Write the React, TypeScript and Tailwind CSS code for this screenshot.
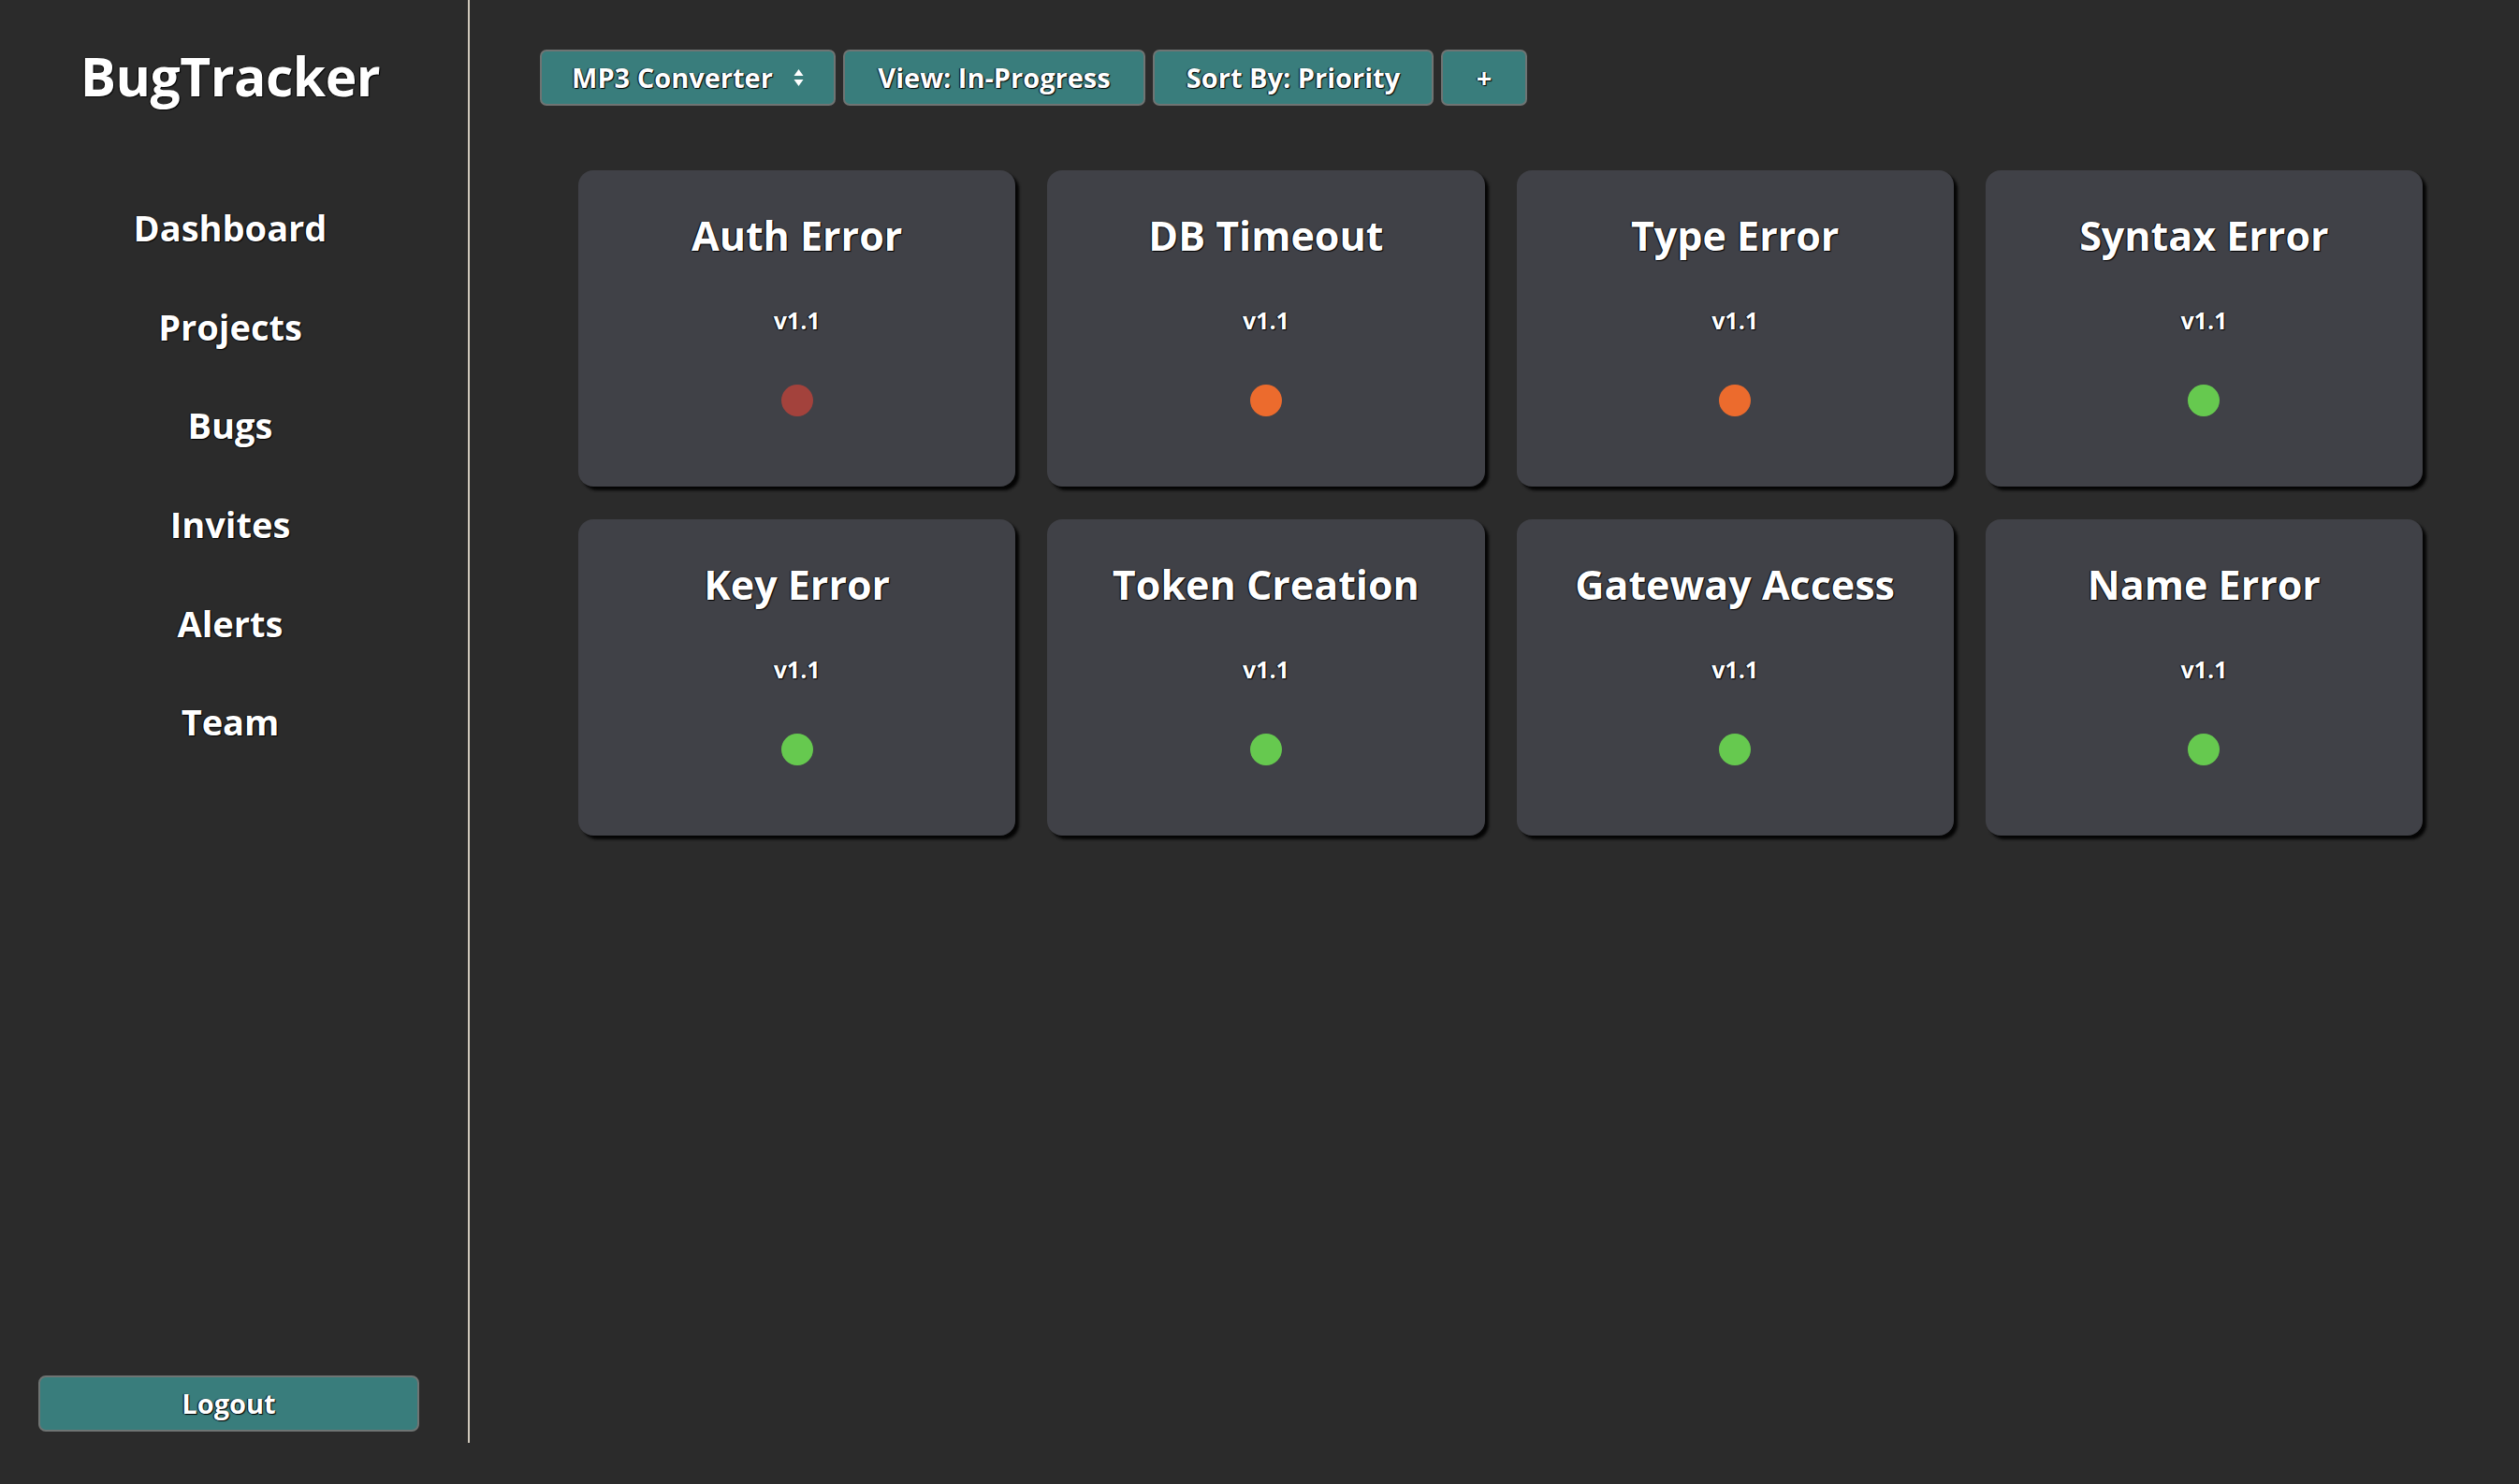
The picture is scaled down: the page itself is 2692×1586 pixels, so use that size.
const navItems = ['Dashboard', 'Projects', 'Bugs', 'Invites', 'Alerts', 'Team']

type Status = 'red' | 'orange' | 'green'

const bugs: { title: string; version: string; status: Status }[] = [
  { title: 'Auth Error', version: 'v1.1', status: 'red' },
  { title: 'DB Timeout', version: 'v1.1', status: 'orange' },
  { title: 'Type Error', version: 'v1.1', status: 'orange' },
  { title: 'Syntax Error', version: 'v1.1', status: 'green' },
  { title: 'Key Error', version: 'v1.1', status: 'green' },
  { title: 'Token Creation', version: 'v1.1', status: 'green' },
  { title: 'Gateway Access', version: 'v1.1', status: 'green' },
  { title: 'Name Error', version: 'v1.1', status: 'green' },
]

const dotColor: Record<Status, string> = {
  red: 'bg-[#a3423c]',
  orange: 'bg-[#ec6b2d]',
  green: 'bg-[#66c94f]',
}

const shadowText = '[text-shadow:1px_1px_1px_#000,-1px_0_1px_#000]'

function Sidebar() {
  return (
    <aside className="flex h-[1542px] w-[502px] shrink-0 flex-col items-center border-r-2 border-[#cfc8bb]">
      <div className="flex w-full flex-col items-center pr-[8px]">
        <h1 className={`pt-[43px] text-[57px] leading-[76px] font-bold tracking-[-0.5px] text-white ${shadowText}`}>BugTracker</h1>
        <nav className="mt-[72px] flex flex-col items-center">
          {navItems.map((item) => (
            <a key={item} className={`flex h-[105.6px] items-center text-[38px] font-bold text-white ${shadowText}`}>
              {item}
            </a>
          ))}
        </nav>
      </div>
      <div className="mt-auto mb-[12px] w-full pl-[41px] pr-[52px]">
        <button className={`h-[60px] w-full rounded-[8px] border-2 border-[#6f7473] bg-[#397d7c] text-[29px] font-bold text-white ${shadowText}`}>
          Logout
        </button>
      </div>
    </aside>
  )
}

function UpDown() {
  return (
    <svg width="11" height="20" viewBox="0 0 11 20" className="ml-[22px]">
      <path d="M5.5 1 L10.5 8 L0.5 8 Z" fill="#fff" />
      <path d="M0.5 12 L10.5 12 L5.5 19 Z" fill="#fff" />
    </svg>
  )
}

function ToolButton({ children, className = '' }: { children: React.ReactNode; className?: string }) {
  return (
    <button
      className={`flex h-[60px] items-center justify-center rounded-[7px] border-2 border-[#6f7473] bg-[#397d7c] text-[29px] font-bold text-white ${shadowText} ${className}`}
    >
      {children}
    </button>
  )
}

function BugCard({ title, version, status }: { title: string; version: string; status: Status }) {
  return (
    <div className="flex h-[338px] flex-col items-center rounded-[16px] bg-[#404147] pt-[38px] shadow-[4px_4px_3px_#050505]">
      <div className={`text-[43px] leading-[64px] font-bold text-white ${shadowText}`}>{title}</div>
      <div className={`mt-[43px] text-[25px] leading-[30px] font-bold text-white ${shadowText}`}>{version}</div>
      <div className={`mt-[54px] h-[34px] w-[34px] rounded-full ${dotColor[status]}`} />
    </div>
  )
}

export default function App() {
  return (
    <div className="flex h-[1586px] w-full bg-[#2b2b2b] font-['Open_Sans',sans-serif]">
      <Sidebar />
      <main className="flex-1 pt-[53px] pl-[75px]">
        <div className="flex gap-[8px]">
          <ToolButton className="w-[316px]">
            MP3 Converter
            <UpDown />
          </ToolButton>
          <ToolButton className="w-[323px]">View: In-Progress</ToolButton>
          <ToolButton className="w-[300px]">Sort By: Priority</ToolButton>
          <ToolButton className="w-[92px]">+</ToolButton>
        </div>
        <div className="mt-[69px] ml-[41px] grid w-[1971px] grid-cols-4 gap-x-[34px] gap-y-[35px]">
          {bugs.map((b) => (
            <BugCard key={b.title} {...b} />
          ))}
        </div>
      </main>
    </div>
  )
}
